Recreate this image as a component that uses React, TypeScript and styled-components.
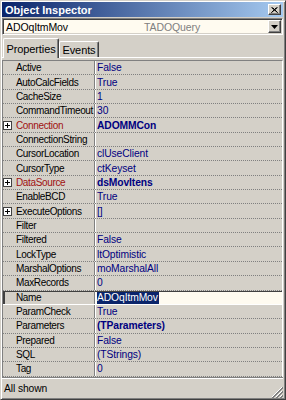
import styled, { createGlobalStyle } from 'styled-components'

const GlobalStyle = createGlobalStyle`
  html, body {
    margin: 0;
    padding: 0;
    background: #d4d0c8;
  }
  body {
    font-family: 'Liberation Sans', Arial, sans-serif;
    font-size: 10.3px;
    letter-spacing: -0.1px;
    color: #000;
  }
  * {
    box-sizing: border-box;
  }
`

const Window = styled.div`
  width: 286px;
  height: 400px;
  display: flex;
  flex-direction: column;
  background: #d4d0c8;
  border-top: 1px solid #d4d0c8;
  border-left: 1px solid #d4d0c8;
  border-right: 1px solid #404040;
  border-bottom: 1px solid #404040;
  box-shadow: inset 1px 1px #fff, inset -1px -1px #808080;
  padding: 1px 2px 1px 1px;
`

const TitleBar = styled.div`
  height: 15px;
  flex: none;
  display: flex;
  align-items: center;
  padding: 0 2px 0 3px;
  background: linear-gradient(to right, #0a246a, #a6caf0);
  color: #fff;
  font-weight: bold;
  font-size: 11px;
  letter-spacing: 0;
`

const TitleText = styled.span`
  flex: 1;
`

const RaisedButton = styled.div<{ $w: number; $h: number }>`
  width: ${(p) => p.$w}px;
  height: ${(p) => p.$h}px;
  flex: none;
  display: flex;
  align-items: center;
  justify-content: center;
  background: #d4d0c8;
  border-top: 1px solid #fff;
  border-left: 1px solid #fff;
  border-right: 1px solid #404040;
  border-bottom: 1px solid #404040;
  box-shadow: inset -1px -1px #808080;
`

const Combo = styled.div`
  margin-top: 1px;
  height: 17px;
  flex: none;
  display: flex;
  align-items: center;
  background: #fffbf0;
  border-top: 1px solid #808080;
  border-left: 1px solid #808080;
  border-right: 1px solid #fff;
  border-bottom: 1px solid #fff;
  box-shadow: inset 1px 1px #404040, inset -1px -1px #d4d0c8;
  padding: 1px 1px 1px 2px;
  font-size: 10.5px;
`

const ObjectName = styled.span`
  width: 139px;
  padding-left: 1px;
`

const ClassName = styled.span`
  flex: 1;
  color: #808080;
`

const TabStrip = styled.div`
  margin-top: 2px;
  height: 20px;
  flex: none;
  display: flex;
  align-items: flex-end;
  padding-left: 1px;
`

const Tab = styled.div<{ $active?: boolean; $w: number }>`
  width: ${(p) => p.$w}px;
  height: ${(p) => (p.$active ? 20 : 16)}px;
  margin-bottom: ${(p) => (p.$active ? -1 : 0)}px;
  position: relative;
  z-index: ${(p) => (p.$active ? 1 : 0)};
  display: flex;
  align-items: center;
  justify-content: center;
  padding-top: ${(p) => (p.$active ? 0 : 1)}px;
  background: #d4d0c8;
  border-top: 1px solid #fff;
  border-left: 1px solid #fff;
  border-right: 1px solid #404040;
  border-radius: 2px 2px 0 0;
  box-shadow: inset -1px 0 #808080;
  font-size: 11px;
  letter-spacing: -0.1px;
`

const Page = styled.div`
  flex: 1;
  display: flex;
  flex-direction: column;
  border-top: 1px solid #fff;
  padding-top: 2px;
`

const Grid = styled.div`
  flex: 1;
  display: flex;
  flex-direction: column;
  border-top: 1px solid #808080;
  border-left: 1px solid #808080;
  border-right: 1px solid #fff;
`

const Row = styled.div<{ $selected?: boolean }>`
  height: 14.35px;
  flex: none;
  display: grid;
  grid-template-columns: 92px 1fr;
  border-bottom: 1px ${(p) => (p.$selected ? 'solid #fff' : 'dotted #808080')};
  box-shadow: ${(p) => (p.$selected ? 'inset 2px 1px #404040' : 'none')};
`

const NameCell = styled.div<{ $ref?: boolean }>`
  display: flex;
  align-items: center;
  border-right: 1px solid #808080;
  color: ${(p) => (p.$ref ? '#a01010' : '#000')};
  font-size: 10px;
  letter-spacing: -0.35px;
  white-space: nowrap;
  overflow: hidden;
`

const ExpandSlot = styled.span`
  width: 13px;
  flex: none;
  display: flex;
  align-items: center;
`

const ValueCell = styled.div<{ $bold?: boolean; $edit?: boolean }>`
  display: flex;
  align-items: center;
  border-left: 1px solid #fff;
  padding-left: 1px;
  color: #000080;
  font-weight: ${(p) => (p.$bold ? 'bold' : 'normal')};
  background: ${(p) => (p.$edit ? '#fffbf0' : 'transparent')};
  margin-top: ${(p) => (p.$edit ? 1 : 0)}px;
  white-space: nowrap;
  overflow: hidden;
`

const Highlight = styled.span`
  background: #0a246a;
  color: #fff;
  padding: 0 1px 0 0;
  line-height: 13px;
`

const StatusBar = styled.div`
  height: 21px;
  flex: none;
  display: flex;
  align-items: center;
  border-top: 1px solid #808080;
  box-shadow: inset 0 1px #fff;
  padding: 1px 0 0 2px;
`

const StatusText = styled.span`
  flex: 1;
`

const Grip = styled.svg`
  align-self: flex-end;
  flex: none;
`

type Prop = {
  name: string
  value: string
  expand?: boolean
  ref?: boolean
  bold?: boolean
  selected?: boolean
}

const props: Prop[] = [
  { name: 'Active', value: 'False' },
  { name: 'AutoCalcFields', value: 'True' },
  { name: 'CacheSize', value: '1' },
  { name: 'CommandTimeout', value: '30' },
  { name: 'Connection', value: 'ADOMMCon', expand: true, ref: true, bold: true },
  { name: 'ConnectionString', value: '' },
  { name: 'CursorLocation', value: 'clUseClient' },
  { name: 'CursorType', value: 'ctKeyset' },
  { name: 'DataSource', value: 'dsMovItens', expand: true, ref: true, bold: true },
  { name: 'EnableBCD', value: 'True' },
  { name: 'ExecuteOptions', value: '[]', expand: true },
  { name: 'Filter', value: '' },
  { name: 'Filtered', value: 'False' },
  { name: 'LockType', value: 'ltOptimistic' },
  { name: 'MarshalOptions', value: 'moMarshalAll' },
  { name: 'MaxRecords', value: '0' },
  { name: 'Name', value: 'ADOqItmMov', selected: true },
  { name: 'ParamCheck', value: 'True' },
  { name: 'Parameters', value: '(TParameters)', bold: true },
  { name: 'Prepared', value: 'False' },
  { name: 'SQL', value: '(TStrings)' },
  { name: 'Tag', value: '0' },
]

function PlusBox() {
  return (
    <svg width="9" height="9" viewBox="0 0 9 9">
      <rect x="0.5" y="0.5" width="8" height="8" fill="#fff" stroke="#404040" />
      <path d="M2 4.5h5M4.5 2v5" stroke="#000" />
    </svg>
  )
}

function App() {
  return (
    <>
      <GlobalStyle />
      <Window>
        <TitleBar>
          <TitleText>Object Inspector</TitleText>
          <RaisedButton $w={13} $h={11}>
            <svg width="7" height="6" viewBox="0 0 7 6">
              <path d="M0.5 0.5l6 5M6.5 0.5l-6 5M1.5 0.5l5 5M5.5 0.5l-5 5" stroke="#000" />
            </svg>
          </RaisedButton>
        </TitleBar>
        <Combo>
          <ObjectName>ADOqItmMov</ObjectName>
          <ClassName>TADOQuery</ClassName>
          <RaisedButton $w={13} $h={13}>
            <svg width="7" height="4" viewBox="0 0 7 4">
              <path d="M0 0h7L3.5 4z" fill="#000" />
            </svg>
          </RaisedButton>
        </Combo>
        <TabStrip>
          <Tab $active $w={56}>Properties</Tab>
          <Tab $w={40}>Events</Tab>
        </TabStrip>
        <Page>
          <Grid>
            {props.map((p) => (
              <Row key={p.name} $selected={p.selected}>
                <NameCell $ref={p.ref}>
                  <ExpandSlot>{p.expand && <PlusBox />}</ExpandSlot>
                  {p.name}
                </NameCell>
                <ValueCell $bold={p.bold} $edit={p.selected}>
                  {p.selected ? <Highlight>{p.value}</Highlight> : p.value}
                </ValueCell>
              </Row>
            ))}
          </Grid>
        </Page>
        <StatusBar>
          <StatusText>All shown</StatusText>
          <Grip width="12" height="12" viewBox="0 0 12 12">
            <path d="M11 1L1 11M11 5L5 11M11 9L9 11" stroke="#fff" />
            <path d="M12 1L1 12M12 2L2 12M12 5L5 12M12 6L6 12M12 9L9 12M12 10L10 12" stroke="#808080" />
          </Grip>
        </StatusBar>
      </Window>
    </>
  )
}

export default App
